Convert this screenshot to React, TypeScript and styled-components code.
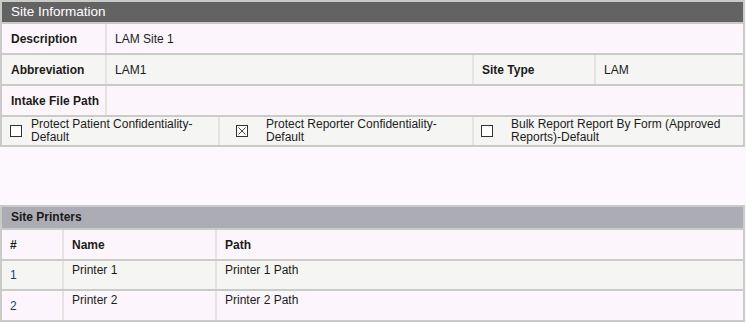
import React, { FunctionComponent } from 'react';
import styled, { createGlobalStyle } from 'styled-components';

const GlobalStyle = createGlobalStyle`
  body {
    margin: 0;
    background: #fdf8fd;
    font-family: "Liberation Sans", Arial, sans-serif;
    font-size: 12px;
    color: #1c1c1c;
  }
`;

const Page = styled.div`
  width: 745px;
`;

const Panel = styled.div<{ $top?: number }>`
  margin-top: ${(p) => p.$top || 0}px;
  background: #c8cbc6;
  padding: 2px;
  display: flex;
  flex-direction: column;
  gap: 2px;
`;

const PanelTitle = styled.div`
  height: 20px;
  background: #636363;
  color: #ffffff;
  font-size: 13.5px;
  line-height: 20px;
  padding-left: 9px;
`;

const SubTitle = styled.div`
  height: 21px;
  background: #acacb4;
  color: #1a1a1a;
  font-weight: bold;
  line-height: 21px;
  padding-left: 9px;
`;

const Row = styled.div<{ $cols: string; $height?: number }>`
  display: grid;
  grid-template-columns: ${(p) => p.$cols};
  column-gap: 2px;
  height: ${(p) => p.$height || 29}px;
  background: #e6e3e2;
`;

const Cell = styled.div<{ $alt?: boolean; $bold?: boolean; $top?: boolean }>`
  background: ${(p) => (p.$alt ? '#f5f5f3' : '#fcf6fc')};
  font-weight: ${(p) => (p.$bold ? 'bold' : 'normal')};
  display: flex;
  align-items: ${(p) => (p.$top ? 'flex-start' : 'center')};
  padding: ${(p) => (p.$top ? '2px 8px 0' : '0 8px')};
  line-height: 14px;
  white-space: nowrap;
`;

const Label = styled(Cell)`
  padding: 0 0 0 9px;
  font-weight: bold;
`;

const CheckCell = styled.div<{ $inset: number; $gap: number }>`
  background: #f5f5f3;
  display: flex;
  align-items: center;
  padding-left: ${(p) => p.$inset}px;
  gap: ${(p) => p.$gap}px;
  line-height: 13px;
`;

const CheckText = styled.span`
  display: block;
`;

const Box = styled.svg`
  flex: none;
  width: 12px;
  height: 12px;
`;

const RowLink = styled.a`
  color: #1f3d6b;
  text-decoration: none;
`;

const Checkbox: FunctionComponent<{ checked?: boolean }> = ({ checked }) => (
  <Box viewBox="0 0 12 12">
    <rect x="0.5" y="0.5" width="11" height="11" fill="#ffffff" stroke="#333" />
    {checked && <path d="M2.5 2.5 L9.5 9.5 M9.5 2.5 L2.5 9.5" stroke="#444" strokeWidth="1" />}
  </Box>
);

const printers = [
  { id: 1, name: 'Printer 1', path: 'Printer 1 Path' },
  { id: 2, name: 'Printer 2', path: 'Printer 2 Path' },
];

const App: FunctionComponent = () => {
  return (
    <Page>
      <GlobalStyle />
      <Panel>
        <PanelTitle>Site Information</PanelTitle>
        <Row $cols="103px 1fr">
          <Label>Description</Label>
          <Cell>LAM Site 1</Cell>
        </Row>
        <Row $cols="103px 365px 120px 1fr">
          <Label $alt>Abbreviation</Label>
          <Cell $alt>LAM1</Cell>
          <Cell $alt $bold>Site Type</Cell>
          <Cell $alt>LAM</Cell>
        </Row>
        <Row $cols="103px 1fr">
          <Label>Intake File Path</Label>
          <Cell />
        </Row>
        <Row $cols="216px 252px 1fr" $height={28}>
          <CheckCell $inset={8} $gap={9}>
            <Checkbox />
            <CheckText>
              Protect Patient Confidentiality-
              <br />
              Default
            </CheckText>
          </CheckCell>
          <CheckCell $inset={16} $gap={18}>
            <Checkbox checked />
            <CheckText>
              Protect Reporter Confidentiality-
              <br />
              Default
            </CheckText>
          </CheckCell>
          <CheckCell $inset={7} $gap={18}>
            <Checkbox />
            <CheckText>
              Bulk Report Report By Form (Approved
              <br />
              Reports)-Default
            </CheckText>
          </CheckCell>
        </Row>
      </Panel>

      <Panel $top={58}>
        <SubTitle>Site Printers</SubTitle>
        <Row $cols="60px 151px 1fr">
          <Cell $bold>#</Cell>
          <Cell $bold>Name</Cell>
          <Cell $bold>Path</Cell>
        </Row>
        {printers.map((p, i) => (
          <Row key={p.id} $cols="60px 151px 1fr" $height={i === 0 ? 28 : 29}>
            <Cell $alt={i % 2 === 0}>
              <RowLink href="#">{p.id}</RowLink>
            </Cell>
            <Cell $alt={i % 2 === 0} $top>
              {p.name}
            </Cell>
            <Cell $alt={i % 2 === 0} $top>
              {p.path}
            </Cell>
          </Row>
        ))}
      </Panel>
    </Page>
  );
};

export default App;
